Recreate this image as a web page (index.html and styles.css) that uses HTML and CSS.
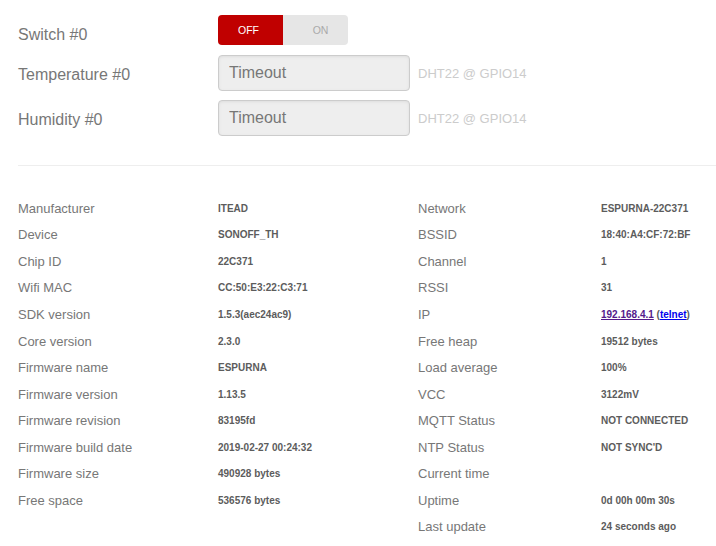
FILE: index.html
```html
<!DOCTYPE html>
<html lang="en">
<head>
    <meta charset="UTF-8">
    <meta name="viewport" content="width=device-width, initial-scale=1.0">
    <title>ESPurna - Status</title>
    <link rel="stylesheet" href="styles.css">
</head>
<body>
    <div class="panel">
        <div class="field switch-row">
            <label>Switch #0</label>
            <div class="toggle">
                <span class="toggle-off">OFF</span>
                <span class="toggle-on">ON</span>
            </div>
        </div>
        <div class="field">
            <label>Temperature #0</label>
            <input type="text" value="Timeout" readonly>
            <span class="hint">DHT22 @ GPIO14</span>
        </div>
        <div class="field">
            <label>Humidity #0</label>
            <input type="text" value="Timeout" readonly>
            <span class="hint">DHT22 @ GPIO14</span>
        </div>

        <hr>

        <div class="info">
            <div class="info-col">
                <div class="info-row"><span class="key">Manufacturer</span><span class="val">ITEAD</span></div>
                <div class="info-row"><span class="key">Device</span><span class="val">SONOFF_TH</span></div>
                <div class="info-row"><span class="key">Chip ID</span><span class="val">22C371</span></div>
                <div class="info-row"><span class="key">Wifi MAC</span><span class="val">CC:50:E3:22:C3:71</span></div>
                <div class="info-row"><span class="key">SDK version</span><span class="val">1.5.3(aec24ac9)</span></div>
                <div class="info-row"><span class="key">Core version</span><span class="val">2.3.0</span></div>
                <div class="info-row"><span class="key">Firmware name</span><span class="val">ESPURNA</span></div>
                <div class="info-row"><span class="key">Firmware version</span><span class="val">1.13.5</span></div>
                <div class="info-row"><span class="key">Firmware revision</span><span class="val">83195fd</span></div>
                <div class="info-row"><span class="key">Firmware build date</span><span class="val">2019-02-27 00:24:32</span></div>
                <div class="info-row"><span class="key">Firmware size</span><span class="val">490928 bytes</span></div>
                <div class="info-row"><span class="key">Free space</span><span class="val">536576 bytes</span></div>
            </div>
            <div class="info-col right">
                <div class="info-row"><span class="key">Network</span><span class="val">ESPURNA-22C371</span></div>
                <div class="info-row"><span class="key">BSSID</span><span class="val">18:40:A4:CF:72:BF</span></div>
                <div class="info-row"><span class="key">Channel</span><span class="val">1</span></div>
                <div class="info-row"><span class="key">RSSI</span><span class="val">31</span></div>
                <div class="info-row"><span class="key">IP</span><span class="val"><a class="visited" href="#">192.168.4.1</a> (<a href="#">telnet</a>)</span></div>
                <div class="info-row"><span class="key">Free heap</span><span class="val">19512 bytes</span></div>
                <div class="info-row"><span class="key">Load average</span><span class="val">100%</span></div>
                <div class="info-row"><span class="key">VCC</span><span class="val">3122mV</span></div>
                <div class="info-row"><span class="key">MQTT Status</span><span class="val">NOT CONNECTED</span></div>
                <div class="info-row"><span class="key">NTP Status</span><span class="val">NOT SYNC'D</span></div>
                <div class="info-row"><span class="key">Current time</span><span class="val"></span></div>
                <div class="info-row"><span class="key">Uptime</span><span class="val">0d 00h 00m 30s</span></div>
                <div class="info-row"><span class="key">Last update</span><span class="val">24 seconds ago</span></div>
            </div>
        </div>
    </div>
</body>
</html>
```

FILE: styles.css
```css
* {
    margin: 0;
    padding: 0;
    box-sizing: border-box;
}

body {
    background-color: #fff;
    font-family: 'Liberation Sans', Arial, sans-serif;
    color: #777;
    overflow: hidden;
}

.panel {
    padding: 15px 0 0 18px;
}

.field {
    display: flex;
    align-items: flex-start;
    margin-bottom: 9px;
}

.switch-row {
    margin-bottom: 10px;
}

.field label {
    width: 200px;
    margin-top: 11px;
    font-size: 16px;
    line-height: 18px;
    color: #777;
}

.toggle {
    display: flex;
    width: 130px;
    height: 30px;
    border-radius: 4px;
    overflow: hidden;
    font-size: 10.5px;
    line-height: 31px;
}

.toggle-off {
    width: 65px;
    padding-right: 4px;
    background-color: #c00000;
    color: #fff;
    text-align: center;
}

.toggle-on {
    width: 65px;
    padding-left: 10px;
    background-color: #e6e6e6;
    color: #aaa;
    text-align: center;
}

.field input {
    width: 192px;
    height: 36px;
    padding: 0 10px;
    background-color: #eee;
    border: 1px solid #ccc;
    border-radius: 4px;
    box-shadow: inset 0 1px 3px #ddd;
    font-family: 'Liberation Sans', Arial, sans-serif;
    font-size: 16px;
    color: #777;
}

.hint {
    margin: 11px 0 0 8px;
    font-size: 13px;
    line-height: 16px;
    color: #ccc;
}

hr {
    border: none;
    border-top: 1px solid #eee;
    margin: 29px 0 29px 0;
}

.info {
    display: flex;
}

.info-col {
    width: 400px;
}

.info-col.right {
    flex: 1;
}

.info-row {
    display: flex;
    align-items: center;
    height: 26.55px;
}

.key {
    width: 200px;
    font-size: 13px;
    color: #777;
}

.right .key {
    width: 183px;
}

.val {
    font-size: 10px;
    font-weight: bold;
    color: #5c5c5c;
}

.val a {
    color: #00e;
}

.val a.visited {
    color: #551a8b;
}
```
